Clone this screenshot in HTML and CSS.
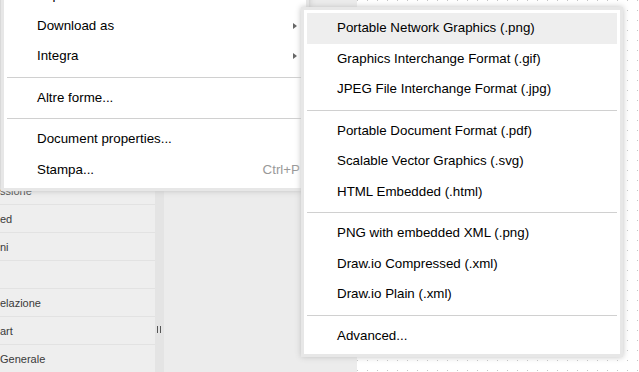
FILE: index.html
```html
<!DOCTYPE html>
<html lang="it">
<head>
  <meta charset="UTF-8">
  <meta name="viewport" content="width=device-width, initial-scale=1.0">
  <title>Download as</title>
  <link rel="stylesheet" href="styles.css">
</head>
<body>

  <div class="app">
    <div class="sidebar">
      <div class="sidebar-title">ssione</div>
      <div class="sidebar-title">ed</div>
      <div class="sidebar-title">ni</div>
      <div class="sidebar-title"></div>
      <div class="sidebar-title">elazione</div>
      <div class="sidebar-title">art</div>
      <div class="sidebar-title">Generale</div>
    </div>
    <div class="splitter"><span class="grip"></span></div>
    <div class="panel"></div>
    <div class="canvas"></div>
  </div>

  <!-- File menu -->
  <div class="menu file-menu">
    <div class="item"><span class="label">Esporta...</span></div>
    <div class="item"><span class="label">Download as</span><span class="arrow"></span></div>
    <div class="item"><span class="label">Integra</span><span class="arrow"></span></div>
    <div class="sep"></div>
    <div class="item"><span class="label">Altre forme...</span></div>
    <div class="sep"></div>
    <div class="item"><span class="label">Document properties...</span></div>
    <div class="item"><span class="label">Stampa...</span><span class="shortcut">Ctrl+P</span></div>
  </div>

  <!-- Download as submenu -->
  <div class="menu submenu">
    <div class="item hover"><span class="label">Portable Network Graphics (.png)</span></div>
    <div class="item"><span class="label">Graphics Interchange Format (.gif)</span></div>
    <div class="item"><span class="label">JPEG File Interchange Format (.jpg)</span></div>
    <div class="sep"></div>
    <div class="item"><span class="label">Portable Document Format (.pdf)</span></div>
    <div class="item"><span class="label">Scalable Vector Graphics (.svg)</span></div>
    <div class="item"><span class="label">HTML Embedded (.html)</span></div>
    <div class="sep"></div>
    <div class="item"><span class="label">PNG with embedded XML (.png)</span></div>
    <div class="item"><span class="label">Draw.io Compressed (.xml)</span></div>
    <div class="item"><span class="label">Draw.io Plain (.xml)</span></div>
    <div class="sep"></div>
    <div class="item"><span class="label">Advanced...</span></div>
  </div>

</body>
</html>
```

FILE: styles.css
```css
body {
  margin: 0;
  font-family: "Liberation Sans", Arial, sans-serif;
  overflow: hidden;
}
.app {
  display: flex;
  height: 372px;
}
.sidebar {
  width: 155px;
  padding-top: 177px;
  box-sizing: border-box;
  background-color: #eeeeee;
  overflow: hidden;
}
.sidebar-title {
  height: 27px;
  line-height: 28px;
  border-bottom: 1px solid #e2e2e2;
  font-size: 11px;
  color: #3a3a3a;
  white-space: nowrap;
}
.splitter {
  width: 9px;
  padding-top: 326px;
  box-sizing: border-box;
  background-color: #e4e4e4;
}
.grip {
  display: block;
  width: 2px;
  height: 7px;
  margin-left: 2px;
  border-left: 1px solid #555;
  border-right: 1px solid #555;
}
.panel {
  width: 193px;
  background-color: #ececec;
}
.canvas {
  flex: 1;
  background-color: #fff;
  background-image:
    linear-gradient(90deg, #fff 9px, transparent 9px),
    linear-gradient(#fff 9px, #c6c6c6 9px);
  background-size: 10px 10px;
  background-position: 1px 1px;
}
.menu {
  position: absolute;
  padding: 3px;
  border: 3px solid #e7e7e7;
  background-color: #fff;
  box-shadow: 0 0 6px #c0c0c0;
  font-size: 13.33px;
  color: #000;
}
.file-menu {
  left: 1px;
  top: -26px;
  width: 296px;
}
.submenu {
  left: 301px;
  top: 7px;
  width: 310px;
}
.item {
  display: flex;
  height: 30.5px;
  line-height: 30.5px;
  padding: 0 30px;
  white-space: nowrap;
}
.file-menu .item {
  padding-right: 3px;
}
.item .label {
  flex: 1;
}
.hover {
  background-color: #eeeeee;
}
.sep {
  margin: 5px 0;
  border-top: 1px solid #d0d0d0;
}
.arrow {
  align-self: center;
  margin-right: 3px;
  border-left: 4px solid #666;
  border-top: 3.5px solid transparent;
  border-bottom: 3.5px solid transparent;
}
.shortcut {
  color: #999;
}
```
